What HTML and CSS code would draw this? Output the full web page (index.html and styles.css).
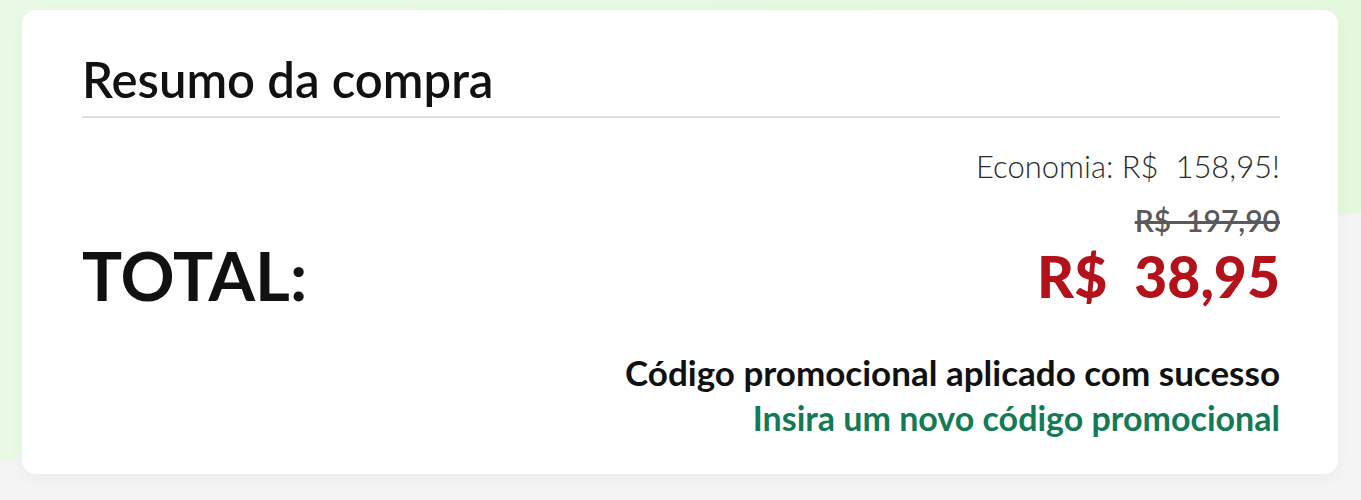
FILE: index.html
```html
<!DOCTYPE html>
<html lang="pt-BR">
<head>
    <meta charset="UTF-8">
    <meta name="viewport" content="width=device-width, initial-scale=1.0">
    <title>Resumo da compra</title>
    <link rel="stylesheet" href="styles.css">
</head>
<body>
    <div class="backdrop"></div>
    <div class="card">
        <h2 class="card-title">Resumo da compra</h2>

        <!-- Totais -->
        <div class="summary">
            <div class="total-label">TOTAL:</div>
            <div class="prices">
                <div class="saving">Economia: R$&nbsp; 158,95!</div>
                <div class="old-price">R$&nbsp; 197,90</div>
                <div class="new-price">R$&nbsp; 38,95</div>
            </div>
        </div>

        <!-- Cupom -->
        <div class="promo">
            <div class="promo-ok">Código promocional aplicado com sucesso</div>
            <a class="promo-link" href="#">Insira um novo código promocional</a>
        </div>
    </div>
</body>
</html>
```

FILE: styles.css
```css
body {
    font-family: Lato, "Open Sans", sans-serif;
    margin: 0;
    padding: 10px 23px 26px 22px;
    background-color: #f4f4f4;
    color: #111;
    position: relative;
}
.backdrop {
    position: absolute;
    top: 0;
    left: 0;
    right: 0;
    height: 470px;
    background: linear-gradient(90deg, #eaf9e6 0%, #e3f8dd 100%);
    clip-path: polygon(0 0, 100% 0, 100% 212px, 97% 218px, 0 462px);
}
.card {
    position: relative;
    background-color: #fff;
    border-radius: 14px;
    box-shadow: 0 4px 16px rgba(0, 0, 0, 0.04);
    padding: 44px 58px 33px 60px;
}
.card-title {
    margin: 0;
    font-size: 49px;
    font-weight: 600;
    line-height: 50px;
    padding-bottom: 12px;
    border-bottom: 2px solid #dedede;
}
.summary {
    display: flex;
    justify-content: space-between;
    align-items: flex-end;
    margin-top: 28px;
}
.total-label {
    font-size: 67px;
    font-weight: 700;
    line-height: 60px;
}
.prices {
    text-align: right;
}
.saving {
    font-size: 31px;
    font-weight: 300;
    color: #2a2a2a;
    line-height: 40px;
}
.old-price {
    font-size: 30px;
    font-weight: 600;
    color: #5a5a5a;
    text-decoration: line-through;
    line-height: 36px;
    margin-top: 16px;
}
.new-price {
    font-size: 57px;
    font-weight: 900;
    color: #b3121b;
    line-height: 58px;
    margin-top: 9px;
}
.promo {
    display: flex;
    flex-direction: column;
    align-items: flex-end;
    margin-top: 44px;
}
.promo-ok {
    font-size: 35px;
    font-weight: 700;
    line-height: 46px;
}
.promo-link {
    font-size: 34px;
    font-weight: 700;
    color: #137a56;
    text-decoration: none;
    line-height: 46px;
}
```
